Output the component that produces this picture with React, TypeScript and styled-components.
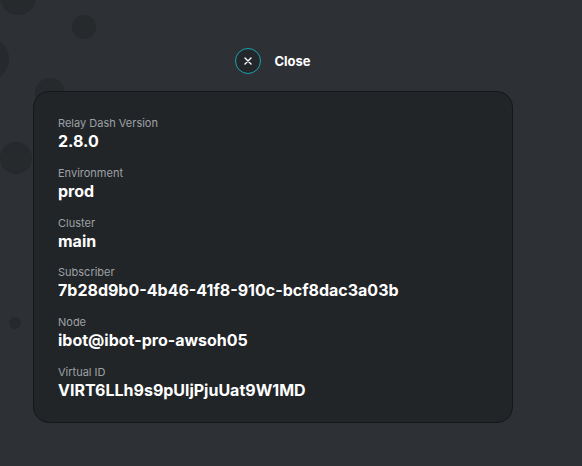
import React from "react";
import styled, { createGlobalStyle } from "styled-components";

const Global = createGlobalStyle`
  html, body { margin: 0; padding: 0; background: #2d3034; }
  body { font-family: Inter, "Noto Sans", sans-serif; }
`;

const Page = styled.div`
  position: relative;
  width: 582px;
  height: 466px;
  overflow: hidden;
  background: #2d3034;
  display: flex;
  flex-direction: column;
  align-items: flex-start;
`;

const Bubble = styled.div<{ $x: number; $y: number; $r: number }>`
  position: absolute;
  left: ${(p) => p.$x - p.$r}px;
  top: ${(p) => p.$y - p.$r}px;
  width: ${(p) => p.$r * 2}px;
  height: ${(p) => p.$r * 2}px;
  border-radius: 50%;
  background: #272a2d;
`;

const CloseRow = styled.button`
  position: relative;
  align-self: center;
  margin: 48px 0 0 -36px;
  display: flex;
  align-items: center;
  gap: 13px;
  background: none;
  border: none;
  padding: 0;
  cursor: pointer;
  font-family: Inter, sans-serif;
  font-weight: 700;
  font-size: 13px;
  color: #ffffff;
`;

const CloseCircle = styled.span`
  width: 24px;
  height: 24px;
  border-radius: 50%;
  border: 1.5px solid #1aa5ad;
  background: #23262a;
  display: flex;
  align-items: center;
  justify-content: center;
`;

const Card = styled.div`
  position: relative;
  margin: 17px 0 0 33px;
  width: 480px;
  height: 332px;
  box-sizing: border-box;
  border: 1px solid #151719;
  border-radius: 16px;
  background: #222528;
  padding: 24px 24px 0 24px;
  display: flex;
  flex-direction: column;
  gap: 14.8px;
`;

const Item = styled.div`
  display: flex;
  flex-direction: column;
  gap: 1px;
`;

const Label = styled.div`
  font-size: 11px;
  line-height: 14px;
  color: #9da1a6;
`;

const Value = styled.div`
  font-size: 16px;
  line-height: 20px;
  font-weight: 700;
  color: #ffffff;
`;

const rows = [
  ["Relay Dash Version", "2.8.0"],
  ["Environment", "prod"],
  ["Cluster", "main"],
  ["Subscriber", "7b28d9b0-4b46-41f8-910c-bcf8dac3a03b"],
  ["Node", "ibot@ibot-pro-awsoh05"],
  ["Virtual ID", "VIRT6LLh9s9pUljPjuUat9W1MD"],
];

const bubbles = [
  { x: 18, y: -3, r: 18 },
  { x: 84, y: 27, r: 12 },
  { x: -13, y: 59, r: 22 },
  { x: 50, y: 93, r: 15 },
  { x: 16, y: 158, r: 16 },
  { x: 15, y: 323, r: 6 },
];

export default function App() {
  return (
    <>
      <Global />
      <Page>
        {bubbles.map((b, i) => (
          <Bubble key={i} $x={b.x} $y={b.y} $r={b.r} />
        ))}
        <CloseRow>
          <CloseCircle>
            <svg width="10" height="10" viewBox="0 0 10 10">
              <path d="M2 2 L8 8 M8 2 L2 8" stroke="#ffffff" strokeWidth="1.4" strokeLinecap="round" />
            </svg>
          </CloseCircle>
          Close
        </CloseRow>
        <Card>
          {rows.map(([l, v]) => (
            <Item key={l}>
              <Label>{l}</Label>
              <Value>{v}</Value>
            </Item>
          ))}
        </Card>
      </Page>
    </>
  );
}
